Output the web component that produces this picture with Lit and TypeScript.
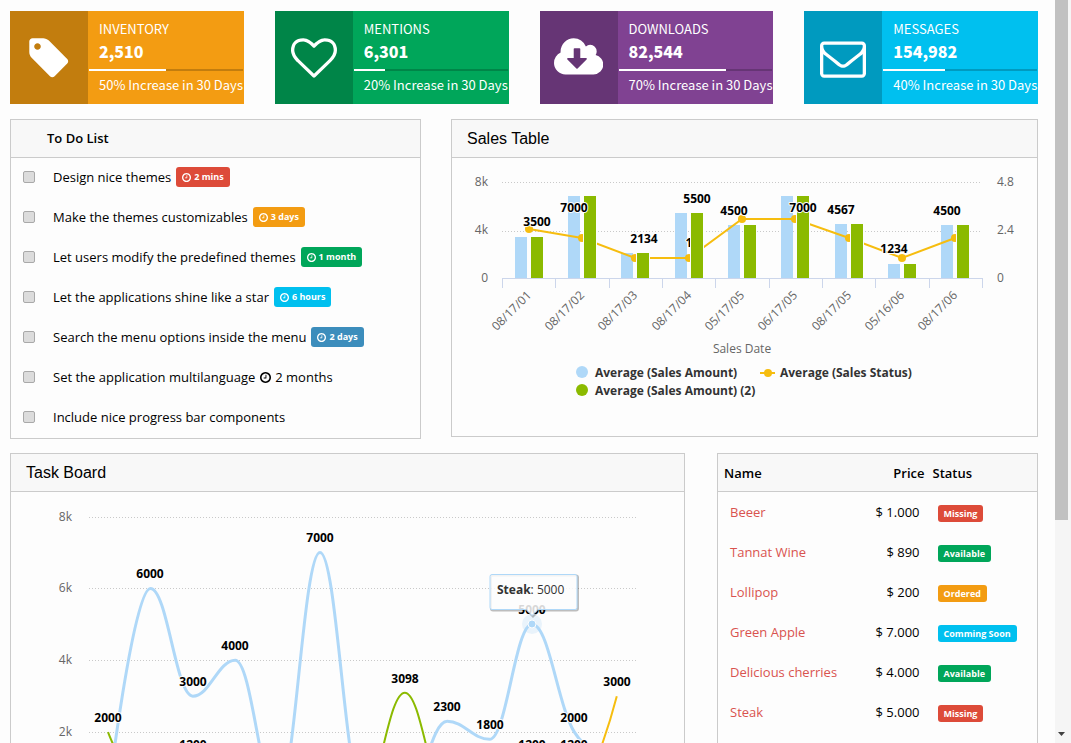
import { LitElement, html, svg, css } from "lit";
import { customElement, property } from "lit/decorators.js";
import { classMap } from "lit/directives/class-map.js";
import { styleMap } from "lit/directives/style-map.js";

const ICONS: Record<string, { box: string; d: string }> = {
  tag: {
    box: "0 0 1792 1792",
    d: "M576 448q0-53-37.5-90.5t-90.5-37.5-90.5 37.5-37.5 90.5 37.5 90.5 90.5 37.5 90.5-37.5 37.5-90.5zm1067 576q0 53-37 90l-491 492q-39 37-91 37-53 0-90-37l-715-716q-38-37-64.5-101t-26.5-117v-416q0-52 38-90t90-38h416q53 0 117 26.5t102 64.5l715 714q37 39 37 91z",
  },
  heart: {
    box: "0 0 1792 1792",
    d: "M1664 596q0-81-21.5-143t-55-98.5-81.5-59.5-94-31-98-8-112 25.5-110.5 64-86.5 72-60 61.5q-18 22-49 22t-49-22q-24-28-60-61.5t-86.5-72-110.5-64-112-25.5-98 8-94 31-81.5 59.5-55 98.5-21.5 143q0 168 187 355l581 560 580-559q188-188 188-356zm128 0q0 221-229 450l-623 600q-18 18-44 18t-44-18l-624-602q-10-8-27.5-26t-55.5-65.5-68-97.5-53.5-121-23.5-138q0-220 127-344t351-124q62 0 126.5 21.5t120 58 95.5 68.5 76 68q36-36 76-68t95.5-68.5 120-58 126.5-21.5q224 0 351 124t127 344z",
  },
  cloud: {
    box: "-64 0 1920 1792",
    d: "M1216 928q0-14-9-23t-23-9h-224v-352q0-13-9.5-22.5t-22.5-9.5h-192q-13 0-22.5 9.5t-9.5 22.5v352h-224q-13 0-22.5 9.5t-9.5 22.5q0 14 9 23l352 352q9 9 23 9t23-9l351-351q10-12 10-24zm640 224q0 159-112.5 271.5t-271.5 112.5h-1088q-185 0-316.5-131.5t-131.5-316.5q0-130 70-240t188-165q-2-30-2-43 0-212 150-362t362-150q156 0 285.5 87t188.5 231q71-62 166-62 106 0 181 75t75 181q0 76-41 138 130 31 213.5 135.5t83.5 238.5z",
  },
  envelope: {
    box: "0 0 1792 1792",
    d: "M1664 1504v-768q-32 36-69 66-268 206-426 338-51 43-83 67t-86.5 48.5-102.5 24.5h-2q-48 0-102.5-24.5t-86.5-48.5-83-67q-158-132-426-338-37-30-69-66v768q0 13 9.5 22.5t22.5 9.5h1472q13 0 22.5-9.5t9.5-22.5zm0-1051v-24.5l-.5-13-3-12.5-5.5-9-9-7.5-14-2.5h-1472q-13 0-22.5 9.5t-9.5 22.5q0 168 147 284 193 152 401 317 6 5 35 29.5t46 37.5 44.5 31.5 50.5 27.5 43 9h2q20 0 43-9t50.5-27.5 44.5-31.5 46-37.5 35-29.5q208-165 401-317 54-43 100.5-115.5t46.5-131.5zm128-37v1088q0 66-47 113t-113 47h-1472q-66 0-113-47t-47-113v-1088q0-66 47-113t113-47h1472q66 0 113 47t47 113z",
  },
  clock: {
    box: "128 128 1536 1536",
    d: "M1024 544v448q0 14-9 23t-23 9h-320q-14 0-23-9t-9-23v-64q0-14 9-23t23-9h224v-352q0-14 9-23t23-9h64q14 0 23 9t9 23zm416 352q0-148-73-273t-198-198-273-73-273 73-198 198-73 273 73 273 198 198 273 73 273-73 198-198 73-273zm224 0q0 209-103 385.5t-279.5 279.5-385.5 103-385.5-103-279.5-279.5-103-385.5 103-385.5 279.5-279.5 385.5-103 385.5 103 279.5 279.5 103 385.5z",
  },
};

const icon = (name: string) =>
  html`<svg class="icon" viewBox=${ICONS[name].box} aria-hidden="true"><path d=${ICONS[name].d}></path></svg>`;

const chartText = css`
  :host { display: block; }
  svg { display: block; width: 100%; height: auto; }
  text { font-family: "Open Sans", "Noto Sans", sans-serif; font-size: 12px; }
  .axis { fill: #666; }
  .value { fill: #000; font-weight: 700; text-anchor: middle; stroke: #fdfdfd; stroke-width: 2px; paint-order: stroke; stroke-linejoin: round; }
  .end { text-anchor: end; }
  .middle { text-anchor: middle; }
  .legend { fill: #333; font-weight: 700; }
  .grid { stroke: #c9c9c9; stroke-dasharray: 1 2; }
  .base { stroke: #ccd6eb; }
`;

@customElement("stat-card")
class StatCard extends LitElement {
  @property() tone = "orange";
  @property() icon = "tag";
  @property() label = "";
  @property() value = "";
  @property() note = "";
  @property({ type: Number }) progress = 0;

  static styles = css`
    :host { display: block; min-width: 0; }
    .card { display: flex; color: #fff; font-family: "Noto Sans CJK JP", "Open Sans", sans-serif; }
    .side { flex: 0 0 78px; display: flex; align-items: center; justify-content: center; }
    .icon { height: 46px; fill: #fff; }
    .body { flex: 1; min-width: 0; padding: 10px 1px 11px; white-space: nowrap; }
    .label, .value, .note { padding-left: 10px; }
    .label, .note { font-size: 13px; line-height: 16px; }
    .value { font-size: 16px; line-height: 24px; font-weight: 900; margin-top: 2px; }
    .track { height: 2px; margin: 6px 0; }
    .fill { height: 100%; background: #fff; }
    .orange { background: #f39c12; }
    .orange .side, .orange .track { background: #c27d0e; }
    .green { background: #00a65a; }
    .green .side, .green .track { background: #008548; }
    .purple { background: #804292; }
    .purple .side, .purple .track { background: #663575; }
    .aqua { background: #00c0ef; }
    .aqua .side, .aqua .track { background: #009abf; }
  `;

  render() {
    return html`<div class=${classMap({ card: true, [this.tone]: true })}>
      <div class="side">${icon(this.icon)}</div>
      <div class="body">
        <div class="label">${this.label}</div>
        <div class="value">${this.value}</div>
        <div class="track"><div class="fill" style=${styleMap({ width: `${this.progress}%` })}></div></div>
        <div class="note">${this.note}</div>
      </div>
    </div>`;
  }
}

const SALES = [
  { date: "08/17/01", amount: 3500, status: 2.5 },
  { date: "08/17/02", amount: 7000, status: 2 },
  { date: "08/17/03", amount: 2134, status: 1 },
  { date: "08/17/04", amount: 5500, status: 1 },
  { date: "05/17/05", amount: 4500, status: 3 },
  { date: "06/17/05", amount: 7000, status: 3 },
  { date: "08/17/05", amount: 4567, status: 2 },
  { date: "05/16/06", amount: 1234, status: 1 },
  { date: "08/17/06", amount: 4500, status: 2 },
];

const SALES_LABELS: [number, number][] = [
  [85, 68], [122, 54], [192, 85], [245, 45], [282, 57], [351, 54], [389, 56], [442, 95], [495, 57],
];

@customElement("sales-chart")
class SalesChart extends LitElement {
  static styles = [
    chartText,
    css`
      .blue { fill: #afd8f8; }
      .green { fill: #8bba00; }
      .barg { fill: #8bba00; stroke: #fdfdfd; stroke-width: 2px; paint-order: stroke; }
      .dot { fill: #f6bd0f; }
      .line { fill: none; stroke: #f6bd0f; stroke-width: 2px; }
    `,
  ];

  render() {
    const left = 50;
    const right = 530;
    const base = 120;
    const step = (right - left) / SALES.length;
    const cx = (i: number) => Math.round(left + step * (i + 0.5));
    const top = (v: number) => Math.round(base - (v / 8000) * 94);
    const sy = (v: number) => Math.round(base - (v / 4.8) * 95);
    return html`<svg viewBox="0 0 585 278" role="img" aria-label="Sales by date">
      ${[24.5, 73.5].map((y) => svg`<line class="grid" x1=${left} x2=${right} y1=${y} y2=${y}></line>`)}
      ${["8k", "4k", "0"].map((t, i) => svg`<text class="axis end" x="36" y=${28 + i * 48}>${t}</text>`)}
      ${["4.8", "2.4", "0"].map((t, i) => svg`<text class="axis" x="545" y=${28 + i * 48}>${t}</text>`)}
      ${SALES.map((s, i) => svg`<rect class="blue" x=${cx(i) - 14} y=${top(s.amount)} width="12" height=${base - top(s.amount)}></rect>`)}
      <polyline class="line" points=${SALES.map((s, i) => `${cx(i)},${sy(s.status)}`).join(" ")}></polyline>
      ${SALES.map((s, i) => svg`<circle class="dot" cx=${cx(i)} cy=${sy(s.status)} r="4"></circle>`)}
      <text class="value" x="237" y="89">1</text>
      ${SALES.map((s, i) => svg`<rect class="barg" x=${cx(i) + 2} y=${top(s.amount)} width="12" height=${base - top(s.amount)}></rect>`)}
      <line class="base" x1=${left} x2=${right} y1="120.5" y2="120.5"></line>
      ${Array.from({ length: 10 }, (_, i) => {
        const x = Math.round(left + step * i) + 0.5;
        return svg`<line class="base" x1=${x} x2=${x} y1="120" y2="130"></line>`;
      })}
      ${SALES_LABELS.map(([x, y], i) => svg`<text class="value" x=${x} y=${y}>${SALES[i].amount}</text>`)}
      ${SALES.map((s, i) => svg`<text class="axis end" transform="translate(${cx(i) + 3} 138) rotate(-45)">${s.date}</text>`)}
      <text class="axis middle" x="290" y="195">Sales Date</text>
      <circle class="blue" cx="130" cy="214" r="6"></circle>
      <text class="legend" x="143" y="219">Average (Sales Amount)</text>
      <line class="line" x1="308" x2="323" y1="215" y2="215"></line>
      <circle class="dot" cx="316" cy="215" r="4"></circle>
      <text class="legend" x="328" y="219">Average (Sales Status)</text>
      <circle class="green" cx="130" cy="232" r="6"></circle>
      <text class="legend" x="143" y="237">Average (Sales Amount) (2)</text>
    </svg>`;
  }
}

/* Smooth curve whose control points never overshoot the neighbouring samples. */
function spline(p: [number, number][]): string {
  let d = `M${p[0][0]} ${p[0][1]}`;
  let outX = p[0][0];
  let outY = p[0][1];
  for (let i = 1; i < p.length; i++) {
    const [x, y] = p[i];
    let inX = x;
    let inY = y;
    let nextX = x;
    let nextY = y;
    if (i < p.length - 1) {
      const [px, py] = p[i - 1];
      const [nx, ny] = p[i + 1];
      inX = (1.5 * x + px) / 2.5;
      inY = (1.5 * y + py) / 2.5;
      nextX = (1.5 * x + nx) / 2.5;
      nextY = (1.5 * y + ny) / 2.5;
      const shift = ((nextY - inY) * (nextX - x)) / (nextX - inX) + y - nextY;
      inY += shift;
      nextY += shift;
      if (inY > py && inY > y) {
        inY = Math.max(py, y);
        nextY = 2 * y - inY;
      } else if (inY < py && inY < y) {
        inY = Math.min(py, y);
        nextY = 2 * y - inY;
      }
      if (nextY > ny && nextY > y) {
        nextY = Math.max(ny, y);
        inY = 2 * y - nextY;
      } else if (nextY < ny && nextY < y) {
        nextY = Math.min(ny, y);
        inY = 2 * y - nextY;
      }
    }
    d += `C${outX} ${outY} ${inX} ${inY} ${x} ${y}`;
    outX = nextX;
    outY = nextY;
  }
  return d;
}

const TASKS = {
  blue: [200, 6000, 3000, 4000, 200, 7000, 300, 200, 2300, 1800, 5000, 2000, 1250],
  green: [2000, 200, 1250, 600, 900, 400, 200, 3098, 200, 700, 1250, 1250, 500],
  yellow: [300, 500, 400, 600, 300, 500, 400, 600, 300, 500, 400, 300, 3000],
};

const TASK_LABELS: [number, number, string][] = [
  [0, 2000, "2000"], [1, 6000, "6000"], [2, 3000, "3000"], [3, 4000, "4000"], [5, 7000, "7000"],
  [7, 3098, "3098"], [8, 2300, "2300"], [9, 1800, "1800"], [10, 5000, "5000"], [11, 2000, "2000"],
  [12, 3000, "3000"], [2, 1250, "1200"], [10, 1250, "1200"], [11, 1250, "1200"],
];

const TIP = "M481 82.5h83q2 0 2 2v31q0 2-2 2h-37l-6 6-6-6h-34q-2 0-2-2v-31q0-2 2-2z";

@customElement("task-chart")
class TaskChart extends LitElement {
  static styles = [
    chartText,
    css`
      .curve { fill: none; }
      .cblue { stroke: #afd8f8; stroke-width: 3px; }
      .cgreen { stroke: #8bba00; stroke-width: 2px; }
      .cyellow { stroke: #f6bd0f; stroke-width: 2px; }
      .dot { fill: #afd8f8; stroke: #fdfdfd; }
      .halo { fill: #afd8f8; opacity: 0.25; }
      .shade { fill: none; stroke: #000; stroke-opacity: 0.25; stroke-width: 2px; }
      .tip { fill: #fdfdfd; fill-opacity: 0.85; stroke: #afd8f8; }
      .tiptext { fill: #333; }
      .strong { font-weight: 700; }
    `,
  ];

  render() {
    const x = (i: number) => 97 + 42.4 * i;
    const y = (v: number) => 312 - (v / 8000) * 287.5;
    const path = (v: number[]) => spline(v.map((n, i) => [x(i), y(n)] as [number, number]));
    return html`<svg viewBox="0 0 673 360" role="img" aria-label="Tasks">
      ${[8, 6, 4, 2, 0].map((k) => {
        const gy = Math.round(y(k * 1000)) + 0.5;
        return svg`<line class="grid" x1="78" x2="626" y1=${gy} y2=${gy}></line>
          <text class="axis end" x="61" y=${Math.round(gy) + 3}>${k ? `${k}k` : "0"}</text>`;
      })}
      <path class="curve cblue" d=${path(TASKS.blue)}></path>
      <path class="curve cgreen" d=${path(TASKS.green)}></path>
      <path class="curve cyellow" d=${path(TASKS.yellow)}></path>
      ${TASK_LABELS.map(([i, v, t]) => svg`<text class="value" x=${Math.round(x(i))} y=${Math.round(y(v)) - 10}>${t}</text>`)}
      <circle class="halo" cx="521" cy="132" r="10"></circle>
      <circle class="dot" cx="521" cy="132" r="4"></circle>
      <path class="shade" d=${TIP} transform="translate(1 1)"></path>
      <path class="tip" d=${TIP}></path>
      <text class="tiptext" x="486" y="102"><tspan class="strong">Steak</tspan>: 5000</text>
    </svg>`;
  }
}

const TODOS = [
  { text: "Design nice themes", time: "2 mins", tone: "red" },
  { text: "Make the themes customizables", time: "3 days", tone: "orange" },
  { text: "Let users modify the predefined themes", time: "1 month", tone: "green" },
  { text: "Let the applications shine like a star", time: "6 hours", tone: "aqua" },
  { text: "Search the menu options inside the menu", time: "2 days", tone: "blue" },
  { text: "Set the application multilanguage", time: "2 months", tone: "" },
  { text: "Include nice progress bar components", time: "", tone: "" },
];

const PRODUCTS = [
  { name: "Beeer", price: "$ 1.000", status: "Missing", tone: "red" },
  { name: "Tannat Wine", price: "$ 890", status: "Available", tone: "green" },
  { name: "Lollipop", price: "$ 200", status: "Ordered", tone: "orange" },
  { name: "Green Apple", price: "$ 7.000", status: "Comming Soon", tone: "aqua" },
  { name: "Delicious cherries", price: "$ 4.000", status: "Available", tone: "green" },
  { name: "Steak", price: "$ 5.000", status: "Missing", tone: "red" },
];

@customElement("app-root")
class AppRoot extends LitElement {
  static styles = css`
    :host {
      display: flex;
      height: 100vh;
      overflow: hidden;
      background: #fdfdfd;
      color: #000;
      font: 13px/20px "Open Sans", "Noto Sans", sans-serif;
    }
    * { box-sizing: border-box; }
    main { flex: 1; min-width: 0; overflow: hidden; padding: 11px 17px 0 10px; }
    .stats { display: grid; grid-template-columns: repeat(4, minmax(0, 1fr)); gap: 31px; }
    .row { display: grid; }
    .upper { grid-template-columns: minmax(0, 411fr) minmax(0, 587fr); gap: 30px; margin-top: 15px; align-items: start; }
    .lower { grid-template-columns: minmax(0, 675fr) minmax(0, 321fr); gap: 32px; margin-top: 14px; }
    .panel { border: 1px solid #cbcbcb; }
    .panel h2 {
      margin: 0;
      height: 38px;
      padding-left: 15px;
      border-bottom: 1px solid #cbcbcb;
      background: #f8f8f8;
      font: 16px/37px "Liberation Sans", Arial, sans-serif;
    }
    .panel h2.list { padding-left: 36px; font: 600 13px/37px "Open Sans", "Noto Sans", sans-serif; }
    ul { margin: 0; padding: 0; list-style: none; }
    li { height: 40px; display: flex; align-items: center; padding: 0 0 2px 12px; white-space: nowrap; }
    input {
      appearance: none;
      width: 12px;
      height: 12px;
      margin: 0 18px 0 0;
      border: 1px solid #a9a9a9;
      border-radius: 2px;
      background: #dcdcdc;
    }
    label { display: flex; align-items: center; gap: 5px; }
    .icon { fill: currentColor; }
    .badge {
      display: inline-flex;
      align-items: center;
      gap: 3px;
      padding: 0 6px;
      border-radius: 3px;
      color: #fff;
      font-size: 9px;
      line-height: 17px;
      font-weight: 700;
      vertical-align: middle;
    }
    label .badge { line-height: 20px; }
    .badge .icon { width: 9px; }
    .plain { display: flex; align-items: center; gap: 4px; }
    .plain .icon { width: 11px; }
    .red { background: #dd4b39; }
    .orange { background: #f39c12; }
    .green { background: #00a65a; }
    .aqua { background: #00c0ef; }
    .blue { background: #3c8dbc; }
    table { width: 100%; border-spacing: 0; table-layout: fixed; white-space: nowrap; }
    th { height: 38px; padding: 0 4px; text-align: left; font-weight: 600; background: #f8f8f8; border-bottom: 1px solid #cbcbcb; }
    th:first-child { width: 40%; padding-left: 6px; }
    th:nth-child(2) { width: 26%; }
    td { height: 40px; padding: 0 9px; }
    td:first-child { padding-left: 12px; }
    .price { text-align: right; }
    a { color: #d9534f; text-decoration: none; }
    .scroll { flex: 0 0 16px; display: flex; flex-direction: column; justify-content: space-between; background: #f5f5f5; padding-right: 3px; }
    .thumb { height: 70%; background: #c1c1c1; }
    .down { display: block; width: 9px; margin: 0 auto 6px 2px; fill: #404040; }
  `;

  render() {
    return html`
      <main>
        <section class="stats">
          <stat-card tone="orange" icon="tag" label="INVENTORY" value="2,510" progress="50" note="50% Increase in 30 Days"></stat-card>
          <stat-card tone="green" icon="heart" label="MENTIONS" value="6,301" progress="20" note="20% Increase in 30 Days"></stat-card>
          <stat-card tone="purple" icon="cloud" label="DOWNLOADS" value="82,544" progress="70" note="70% Increase in 30 Days"></stat-card>
          <stat-card tone="aqua" icon="envelope" label="MESSAGES" value="154,982" progress="40" note="40% Increase in 30 Days"></stat-card>
        </section>
        <div class="row upper">
          <section class="panel">
            <h2 class="list">To Do List</h2>
            <ul>
              ${TODOS.map(
                (t, i) => html`<li>
                  <input type="checkbox" id="todo-${i}" />
                  <label for="todo-${i}">
                    <span>${t.text}</span>
                    ${t.time
                      ? html`<span class=${t.tone ? `badge ${t.tone}` : "plain"}>${icon("clock")}<span>${t.time}</span></span>`
                      : ""}
                  </label>
                </li>`
              )}
            </ul>
          </section>
          <section class="panel">
            <h2>Sales Table</h2>
            <sales-chart></sales-chart>
          </section>
        </div>
        <div class="row lower">
          <section class="panel">
            <h2>Task Board</h2>
            <task-chart></task-chart>
          </section>
          <section class="panel">
            <table>
              <thead>
                <tr><th>Name</th><th class="price">Price</th><th>Status</th></tr>
              </thead>
              <tbody>
                ${PRODUCTS.map(
                  (p) => html`<tr>
                    <td><a href="#">${p.name}</a></td>
                    <td class="price">${p.price}</td>
                    <td><span class="badge ${p.tone}">${p.status}</span></td>
                  </tr>`
                )}
              </tbody>
            </table>
          </section>
        </div>
      </main>
      <div class="scroll" aria-hidden="true">
        <div class="thumb"></div>
        <svg class="down" viewBox="0 0 9 5"><path d="M1 0h7L4.500 4z"></path></svg>
      </div>
    `;
  }
}
